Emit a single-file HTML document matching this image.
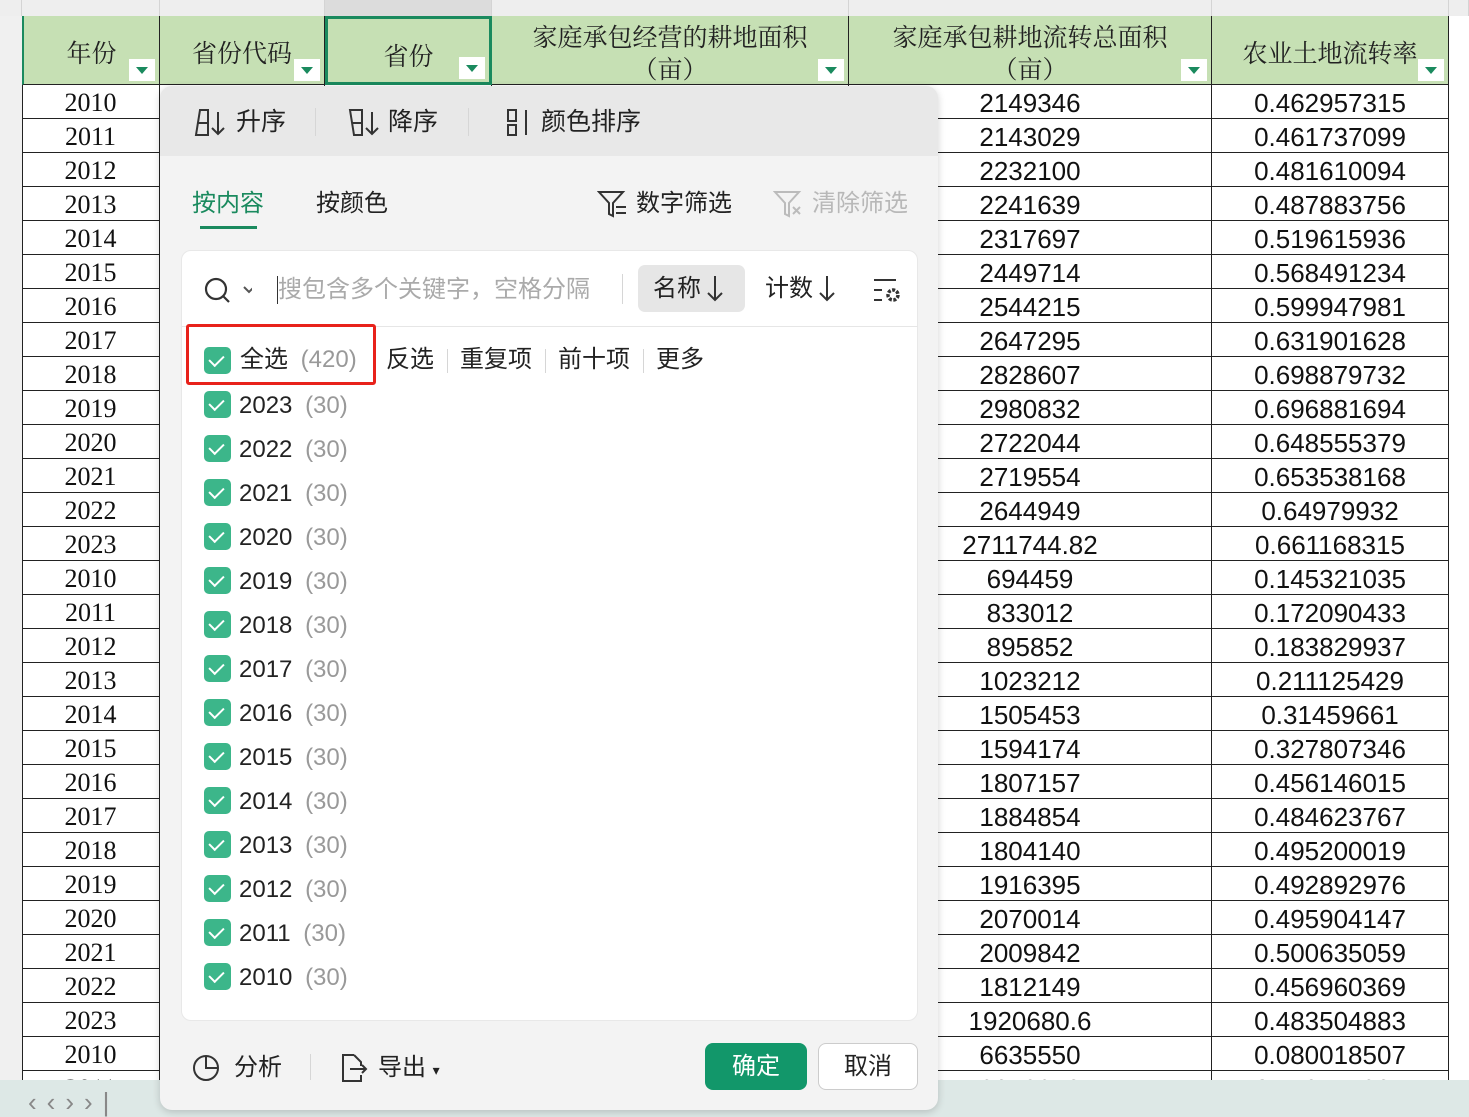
<!DOCTYPE html>
<html><head><meta charset="utf-8"><style>
*{margin:0;padding:0;box-sizing:border-box}
body{width:1469px;height:1117px;overflow:hidden;background:#fff;position:relative;font-family:"Liberation Sans","Noto Sans CJK SC",sans-serif}
.a{position:absolute}
.colh{position:absolute;top:0;height:16px;background:#eeeeee;border-right:1px solid #d4d4d4}
.h{position:absolute;top:16px;height:69px;background:#c6e0b4;border-right:1px solid #222;border-bottom:1px solid #222;font-family:"Noto Serif CJK SC",serif;font-size:25px;color:#222;text-align:center;line-height:32px;padding-top:4px}
.dd{position:absolute;right:4px;bottom:3px;width:26px;height:22px;background:#fff}
.dd:after{content:"";position:absolute;left:7px;top:8px;border-left:6px solid transparent;border-right:6px solid transparent;border-top:7px solid #1a8a5e}
.r{position:absolute;height:34px;border-bottom:1px solid #222;border-right:1px solid #222;text-align:center;line-height:36px;font-size:26px;color:#111}
.yr{font-family:"Liberation Serif",serif}
.pop{position:absolute;left:160px;top:86px;width:778px;height:1024px;background:#f3f3f3;border-radius:12px;box-shadow:0 2px 8px rgba(0,0,0,.18);overflow:hidden}
.t{position:absolute;font-size:24px;color:#222;white-space:nowrap;line-height:28px}
.cb{position:absolute;width:27px;height:27px;background:#3cb68a;border-radius:5px}
.cb:after{content:"";position:absolute;left:8px;top:5px;width:7px;height:12px;border-right:2.5px solid #fff;border-bottom:2.5px solid #fff;transform:rotate(45deg)}
.g{color:#999;margin-left:6px}
.sep{position:absolute;width:1px;background:#d6d6d6}
</style></head><body>
<div class="colh" style="left:0;width:22px"></div>
<div class="colh" style="left:22px;width:138px"></div>
<div class="colh" style="left:160px;width:165px"></div>
<div class="colh" style="left:325px;width:167px;background:#dcdcdc"></div>
<div class="colh" style="left:492px;width:357px"></div>
<div class="colh" style="left:849px;width:363px"></div>
<div class="colh" style="left:1212px;width:237px"></div>
<div class="colh" style="left:1449px;width:20px"></div>
<div class="a" style="left:0;top:16px;width:22px;height:1064px;background:#f0f0f0"></div>
<div class="a" style="left:22px;top:16px;width:1px;height:1064px;background:#222"></div>
<div class="h" style="left:22px;width:138px;padding-top:20px;border-left:2px solid #1a8a5e">年份<div class="dd"></div></div>
<div class="h" style="left:160px;width:165px;padding-top:20px">省份代码<div class="dd"></div></div>
<div class="h" style="left:325px;width:167px;padding-top:20px;border:3px solid #1a8a5e">省份<div class="dd"></div></div>
<div class="h" style="left:492px;width:357px">家庭承包经营的耕地面积<br>（亩）<div class="dd"></div></div>
<div class="h" style="left:849px;width:363px">家庭承包耕地流转总面积<br>（亩）<div class="dd"></div></div>
<div class="h" style="left:1212px;width:237px;padding-top:20px">农业土地流转率<div class="dd"></div></div>
<div id="g"></div>
<div class="a" style="left:0;top:1080px;width:1469px;height:37px;background:#dde8e6"></div>
<div class="t" style="left:28px;top:1088px;color:#888;font-size:26px;letter-spacing:10px">‹‹››|</div>
<div class="pop">
 <div class="a" style="left:0;top:0;width:778px;height:70px;background:#e8e8e8"></div>
 <svg class="a" style="left:34px;top:21px" width="36" height="32"><path d="M2 28L6 3H14V28ZM4 16H14" fill="none" stroke="#333" stroke-width="2"/><path d="M24 5V27M18 21L24 27L30 21" fill="none" stroke="#333" stroke-width="2"/></svg>
 <div class="t" style="left:76px;top:22px;font-size:25px">升序</div>
 <div class="sep" style="left:155px;top:22px;height:28px"></div>
 <svg class="a" style="left:188px;top:21px" width="36" height="32"><path d="M2 3L6 28H14V3ZM4 16H14" fill="none" stroke="#333" stroke-width="2"/><path d="M24 5V27M18 21L24 27L30 21" fill="none" stroke="#333" stroke-width="2"/></svg>
 <div class="t" style="left:228px;top:22px;font-size:25px">降序</div>
 <div class="sep" style="left:308px;top:22px;height:28px"></div>
 <svg class="a" style="left:346px;top:21px" width="30" height="32"><path d="M2 3H10V14H2ZM2 18H10V28H2Z" fill="none" stroke="#333" stroke-width="2"/><path d="M20 3V28" stroke="#333" stroke-width="2"/></svg>
 <div class="t" style="left:381px;top:22px;font-size:25px">颜色排序</div>
 <div class="t" style="left:32px;top:104px;color:#1a8a5e">按内容</div>
 <div class="a" style="left:40px;top:140px;width:57px;height:3px;background:#1a8a5e"></div>
 <div class="t" style="left:156px;top:104px">按颜色</div>
 <svg class="a" style="left:437px;top:103px" width="32" height="30"><path d="M2 3H26L16 14V27L12 25V14Z" fill="none" stroke="#333" stroke-width="2"/><path d="M19 18H29M19 24H29" stroke="#333" stroke-width="2"/></svg>
 <div class="t" style="left:476px;top:104px">数字筛选</div>
 <svg class="a" style="left:613px;top:103px" width="32" height="30"><path d="M2 3H26L16 14V27L12 25V14Z" fill="none" stroke="#bbb" stroke-width="2"/><path d="M20 18L27 25M27 18L20 25" stroke="#bbb" stroke-width="2"/></svg>
 <div class="t" style="left:652px;top:104px;color:#b8b8b8">清除筛选</div>
 <div class="a" style="left:21px;top:164px;width:737px;height:771px;background:#fff;border-radius:10px;border:1px solid #e8e8e8"></div>
 <svg class="a" style="left:42px;top:190px" width="50" height="30"><circle cx="14" cy="13" r="10" fill="none" stroke="#333" stroke-width="2.2"/><line x1="21" y1="20" x2="27" y2="26" stroke="#333" stroke-width="2.2"/><path d="M42 11l5 5 5-5" fill="none" stroke="#555" stroke-width="2"/></svg>
 <div class="a" style="left:117px;top:190px;width:1px;height:28px;background:#333"></div>
 <div class="t" style="left:118px;top:190px;color:#aaa">搜包含多个关键字，空格分隔</div>
 <div class="sep" style="left:462px;top:188px;height:30px"></div>
 <div class="a" style="left:478px;top:179px;width:107px;height:47px;background:#e6e6e6;border-radius:7px"></div>
 <div class="t" style="left:493px;top:189px">名称</div>
 <svg class="a" style="left:545px;top:188px" width="20" height="30"><path d="M10 2V26M3 19L10 26L17 19" fill="none" stroke="#333" stroke-width="2"/></svg>
 <div class="t" style="left:605px;top:189px">计数</div>
 <svg class="a" style="left:657px;top:188px" width="20" height="30"><path d="M10 2V26M3 19L10 26L17 19" fill="none" stroke="#333" stroke-width="2"/></svg>
 <svg class="a" style="left:712px;top:190px" width="32" height="28"><path d="M2 4H24M2 14H10M2 24H10" stroke="#333" stroke-width="2"/><circle cx="21" cy="19" r="5" fill="none" stroke="#333" stroke-width="3.5" stroke-dasharray="3 1.5"/></svg>
 <div class="a" style="left:22px;top:240px;width:736px;height:1px;background:#e6e6e6"></div>
 <div class="a" style="left:26px;top:238px;width:190px;height:61px;border:3px solid #e8221b;border-radius:3px"></div>
 <div class="cb" style="left:44px;top:261px"></div>
 <div class="t" style="left:80px;top:260px">全选 <span class="g">(420)</span></div>
 <div class="t" style="left:226px;top:260px">反选</div><div class="sep" style="left:287px;top:263px;height:24px"></div>
 <div class="t" style="left:300px;top:260px">重复项</div><div class="sep" style="left:385px;top:263px;height:24px"></div>
 <div class="t" style="left:398px;top:260px">前十项</div><div class="sep" style="left:483px;top:263px;height:24px"></div>
 <div class="t" style="left:496px;top:260px">更多</div>
 <div id="li"></div>
 <svg class="a" style="left:30px;top:966px" width="32" height="32"><circle cx="16" cy="16" r="12" fill="none" stroke="#333" stroke-width="2"/><path d="M16 4v12h12" fill="none" stroke="#333" stroke-width="2"/></svg>
 <div class="t" style="left:74px;top:968px">分析</div>
 <div class="sep" style="left:150px;top:968px;height:26px"></div>
 <svg class="a" style="left:178px;top:966px" width="34" height="32"><path d="M16 3H5v26h18v-6M16 3l7 7v4M12 17h16M24 13l4 4-4 4" fill="none" stroke="#333" stroke-width="2"/></svg>
 <div class="t" style="left:218px;top:968px">导出 <span style="font-size:14px">▾</span></div>
 <div class="a" style="left:545px;top:957px;width:102px;height:47px;background:#12976a;border-radius:8px;color:#fff;font-size:24px;text-align:center;line-height:47px">确定</div>
 <div class="a" style="left:658px;top:957px;width:100px;height:47px;background:#fff;border:1px solid #ccc;border-radius:8px;font-size:24px;text-align:center;line-height:45px;color:#222">取消</div>
</div>
<script>
var E=["2149346","2143029","2232100","2241639","2317697","2449714","2544215","2647295","2828607","2980832","2722044","2719554","2644949","2711744.82","694459","833012","895852","1023212","1505453","1594174","1807157","1884854","1804140","1916395","2070014","2009842","1812149","1920680.6","6635550","2672346"];
var F=["0.462957315","0.461737099","0.481610094","0.487883756","0.519615936","0.568491234","0.599947981","0.631901628","0.698879732","0.696881694","0.648555379","0.653538168","0.64979932","0.661168315","0.145321035","0.172090433","0.183829937","0.211125429","0.31459661","0.327807346","0.456146015","0.484623767","0.495200019","0.492892976","0.495904147","0.500635059","0.456960369","0.483504883","0.080018507","0.116775365"];
var h="";
for(var i=0;i<30;i++){var t=85+i*34;var y=2010+(i%14);
h+='<div class="r yr" style="left:22px;top:'+t+'px;width:138px">'+y+'</div>';
h+='<div class="r" style="left:160px;top:'+t+'px;width:165px"></div>';
h+='<div class="r" style="left:325px;top:'+t+'px;width:167px"></div>';
h+='<div class="r" style="left:492px;top:'+t+'px;width:357px"></div>';
h+='<div class="r" style="left:849px;top:'+t+'px;width:363px">'+E[i]+'</div>';
h+='<div class="r" style="left:1212px;top:'+t+'px;width:237px">'+F[i]+'</div>';}
document.getElementById("g").innerHTML=h;
var l="";
for(var j=0;j<14;j++){var tt=305+j*44;
l+='<div class="cb" style="left:44px;top:'+tt+'px"></div><div class="t" style="left:79px;top:'+(tt+1)+'px">'+(2023-j)+' <span class="g">(30)</span></div>';}
document.getElementById("li").innerHTML=l;
</script>
</body></html>
